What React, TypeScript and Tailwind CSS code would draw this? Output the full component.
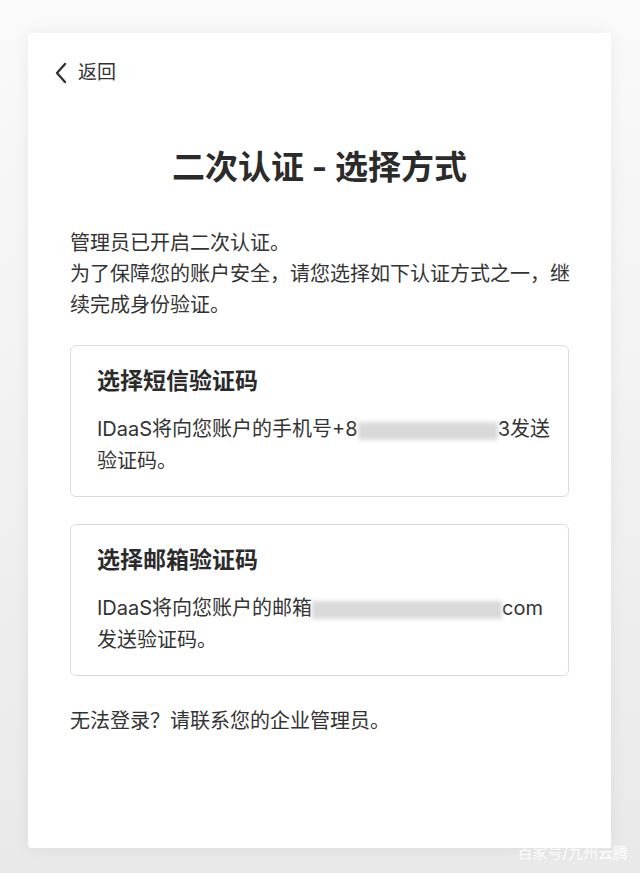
import React from 'react';

const font = { fontFamily: 'Inter, "Noto Sans CJK SC", sans-serif' };

function Blur({ w }: { w: number }) {
  return (
    <span
      className="inline-block h-[18px] align-middle bg-[#d9d9d9] blur-[2px]"
      style={{ width: w }}
    />
  );
}

function OptionCard({ title, children }: { title: string; children: React.ReactNode }) {
  return (
    <div className="rounded-[6px] border border-[#dcdcdc] bg-white px-[26px] pt-[18px] pb-[19px]">
      <div className="text-[23px] font-bold leading-[34px] text-[#2b2b2b]">{title}</div>
      <div className="mt-[15px] text-[20px] leading-[32px] text-[#333]">{children}</div>
    </div>
  );
}

export default function App() {
  return (
    <div
      className="relative h-[873px] w-[640px] overflow-hidden bg-gradient-to-b from-[#fafafa] to-[#e9e9e9] pt-[33px] pl-[28px]"
      style={font}
    >
      <div className="flex h-[815px] w-[583px] flex-col rounded-[4px] bg-white px-[42px] pt-[23px] shadow-[0_0_18px_rgba(0,0,0,0.06)]">
        <div className="-ml-[16px] flex items-center gap-[10px] text-[#333]">
          <svg width="14" height="22" viewBox="0 0 14 22" fill="none">
            <path d="M11 2 L3 11 L11 20" stroke="#333" strokeWidth="2.4" strokeLinecap="round" strokeLinejoin="round" />
          </svg>
          <span className="text-[19px] leading-[34px]">返回</span>
        </div>

        <h1 className="mt-[55px] text-center text-[33px] font-bold leading-[44px] text-[#2b2b2b]">
          二次认证 - 选择方式
        </h1>

        <p className="mt-[39px] whitespace-nowrap text-[20px] leading-[31px] text-[#333]">
          管理员已开启二次认证。
          <br />
          为了保障您的账户安全，请您选择如下认证方式之一，继
          <br />
          续完成身份验证。
        </p>

        <div className="mt-[24px] flex flex-col gap-[27px]">
          <OptionCard title="选择短信验证码">
            <span className="whitespace-nowrap">
              IDaaS将向您账户的手机号+8
              <Blur w={140} />
              3发送
            </span>
            <br />
            验证码。
          </OptionCard>
          <OptionCard title="选择邮箱验证码">
            <span className="whitespace-nowrap">
              IDaaS将向您账户的邮箱
              <Blur w={190} />
              com
            </span>
            <br />
            发送验证码。
          </OptionCard>
        </div>

        <p className="mt-[30px] text-[20px] leading-[31px] text-[#333]">无法登录？请联系您的企业管理员。</p>
      </div>

      <div className="absolute bottom-[10px] right-[12px] text-[15px] leading-[20px] text-white/90">百家号/九州云腾</div>
    </div>
  );
}
